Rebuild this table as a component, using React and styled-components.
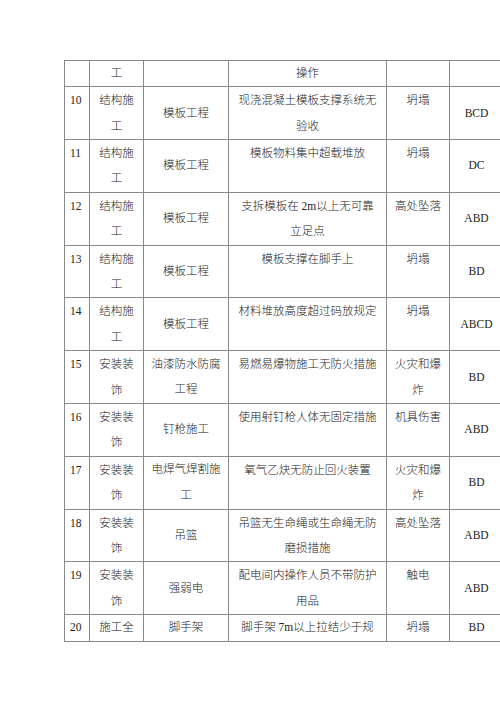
import React from 'react';
import styled, { createGlobalStyle } from 'styled-components';

const GlobalStyle = createGlobalStyle`
  html, body {
    margin: 0;
    padding: 0;
    background: #fff;
    overflow: hidden;
  }
  body {
    font-family: "Liberation Serif", "Noto Sans CJK SC", serif;
    color: #222;
  }
`;

const Page = styled.div`
  width: 500px;
  height: 707px;
  padding: 60px 0 0 64px;
  box-sizing: border-box;
`;

const Table = styled.table`
  border-collapse: collapse;
  table-layout: fixed;
  width: 439px;
  font-size: 11.5px;
  line-height: 25.3px;
`;

const Row = styled.tr`
  height: ${(p) => p.$h}px;
`;

const Cell = styled.td`
  border: 1px solid #8a8a8a;
  padding: ${(p) => (p.$mid ? '0 5px' : '1px 5px 0')};
  text-align: ${(p) => (p.$left ? 'left' : 'center')};
  vertical-align: ${(p) => (p.$mid ? 'middle' : 'top')};
  overflow: hidden;
  white-space: ${(p) => (p.$nowrap ? 'nowrap' : 'pre-line')};
  word-break: break-all;
  font-weight: 300;
`;

const widths = [25, 54, 85, 158, 63, 54];

const rows = [
  ['10', '结构施工', '模板工程', '现浇混凝土模板支撑系统无验收', '坍塌', 'BCD'],
  ['11', '结构施工', '模板工程', '模板物料集中超载堆放', '坍塌', 'DC'],
  ['12', '结构施工', '模板工程', '支拆模板在 2m以上无可靠\n立足点', '高处坠落', 'ABD'],
  ['13', '结构施工', '模板工程', '模板支撑在脚手上', '坍塌', 'BD'],
  ['14', '结构施工', '模板工程', '材料堆放高度超过码放规定', '坍塌', 'ABCD'],
  ['15', '安装装饰', '油漆防水防腐工程', '易燃易爆物施工无防火措施', '火灾和爆炸', 'BD'],
  ['16', '安装装饰', '钉枪施工', '使用射钉枪人体无固定措施', '机具伤害', 'ABD'],
  ['17', '安装装饰', '电焊气焊割施工', '氧气乙炔无防止回火装置', '火灾和爆炸', 'BD'],
  ['18', '安装装饰', '吊篮', '吊篮无生命绳或生命绳无防磨损措施', '高处坠落', 'ABD'],
  ['19', '安装装饰', '强弱电', '配电间内操作人员不带防护用品', '触电', 'ABD'],
];

export default function App() {
  return (
    <>
      <GlobalStyle />
      <Page>
        <Table>
          <colgroup>
            {widths.map((w, i) => (
              <col key={i} style={{ width: w }} />
            ))}
          </colgroup>
          <tbody>
            <Row $h={26}>
              <Cell $left />
              <Cell $mid>工</Cell>
              <Cell $mid />
              <Cell $mid>操作</Cell>
              <Cell $mid />
              <Cell $mid />
            </Row>
            {rows.map((r) => (
              <Row key={r[0]} $h={52.8}>
                <Cell $left>{r[0]}</Cell>
                <Cell>{r[1]}</Cell>
                <Cell $mid>{r[2]}</Cell>
                <Cell>{r[3]}</Cell>
                <Cell>{r[4]}</Cell>
                <Cell $mid>{r[5]}</Cell>
              </Row>
            ))}
            <Row $h={26.5}>
              <Cell $left $mid>20</Cell>
              <Cell $mid $nowrap>施工全</Cell>
              <Cell $mid>脚手架</Cell>
              <Cell $mid $nowrap>脚手架 7m以上拉结少于规</Cell>
              <Cell $mid>坍塌</Cell>
              <Cell $mid>BD</Cell>
            </Row>
          </tbody>
        </Table>
      </Page>
    </>
  );
}
